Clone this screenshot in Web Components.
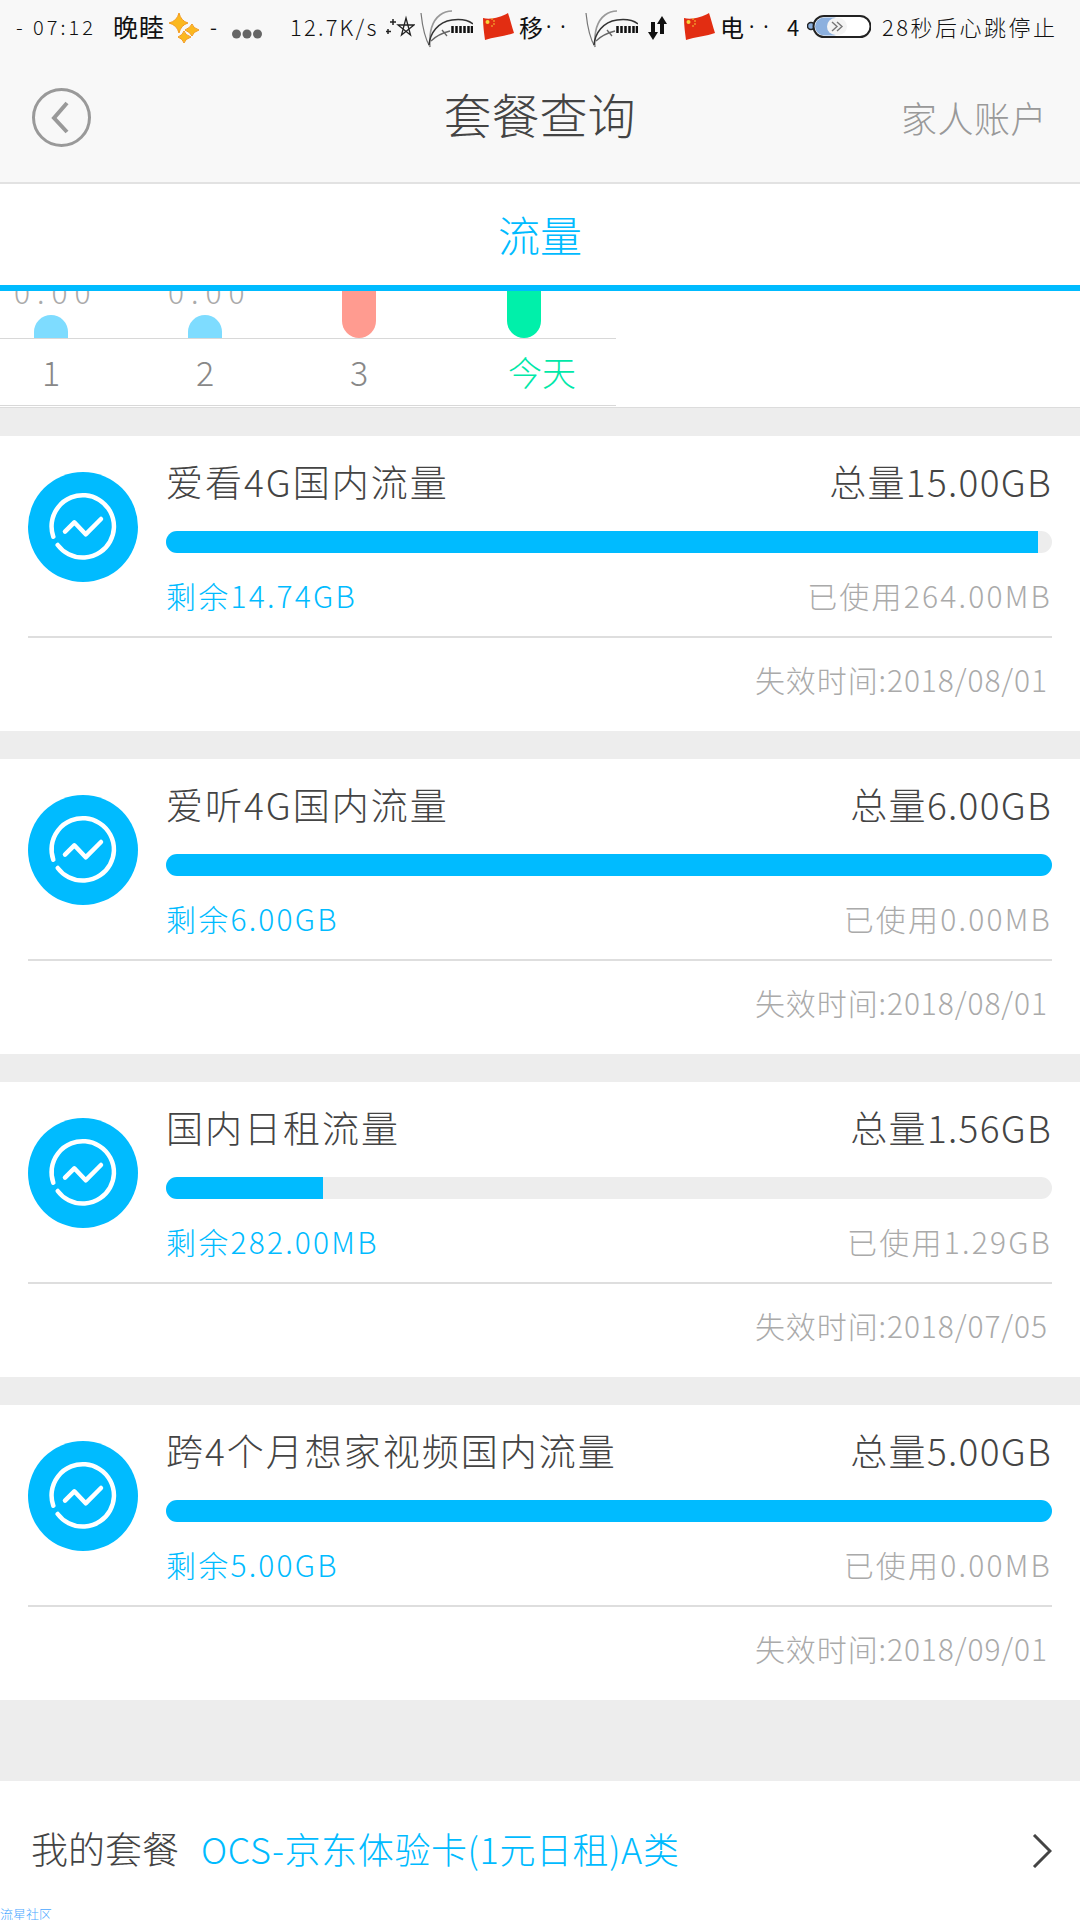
<!DOCTYPE html>
<html>
<head>
<meta charset="utf-8">
<style>
  html, body { margin: 0; padding: 0; background: #fff; }
  body { width: 1080px; height: 1920px; overflow: hidden; font-family: "Noto Sans CJK SC", "Noto Sans", sans-serif; }
  app-page { height: 1920px; }
</style>
</head>
<body>
<app-page>
  <nav-bar title="套餐查询" action="家人账户"></nav-bar>
  <tab-strip label="流量"></tab-strip>
  <usage-chart></usage-chart>
  <data-card name="爱看4G国内流量" total="总量15.00GB" left="剩余14.74GB" used="已使用264.00MB" expiry="失效时间:2018/08/01" percent="98.4"></data-card>
  <data-card name="爱听4G国内流量" total="总量6.00GB" left="剩余6.00GB" used="已使用0.00MB" expiry="失效时间:2018/08/01" percent="100"></data-card>
  <data-card name="国内日租流量" total="总量1.56GB" left="剩余282.00MB" used="已使用1.29GB" expiry="失效时间:2018/07/05" percent="17.7"></data-card>
  <data-card name="跨4个月想家视频国内流量" total="总量5.00GB" left="剩余5.00GB" used="已使用0.00MB" expiry="失效时间:2018/09/01" percent="100"></data-card>
  <plan-row name="OCS-京东体验卡(1元日租)A类"></plan-row>
</app-page>

<script>
const SANS = `"Noto Sans CJK SC", "Noto Sans", sans-serif`;

class AppPage extends HTMLElement {
    constructor() {
        super();
        this.attachShadow({ mode: 'open' });
        this.shadowRoot.innerHTML = `
            <style>
                :host { display: flex; flex-direction: column; width: 1080px; background: #ededed; font-family: ${SANS}; }
                ::slotted(data-card) { margin-top: 28px; }
            </style>
            <slot></slot>
        `;
    }
}
customElements.define('app-page', AppPage);

class StatusBar extends HTMLElement {
    constructor() {
        super();
        this.attachShadow({ mode: 'open' });
        const plant = ml => `<svg width="53" height="46" viewBox="0 0 53 46" fill="none" stroke="#555" style="margin-left:${ml}px">
            <path d="M10 44C4 34 2 20 1 10" stroke-width="1.2" stroke="#777"/>
            <path d="M10 44C9 30 12 18 20 12C24 9 28 8 32 8" stroke-width="1.6" stroke="#999"/>
            <path d="M9 42C10 30 18 19 32 17C40 16 48 17 53 21" stroke-width="1.5" stroke="#333"/>
            <path d="M11 38C16 33 22 30 30 28M22 27L27 33" stroke-width="1.3" stroke="#666"/>
            <path d="M32.500 23V30M36.500 23V30M40.500 23V30M44.500 23V30M48.500 23V30M52 23V30" stroke="#111" stroke-width="2.5"/>
        </svg>`;
        const flag = ml => `<svg width="32" height="28" viewBox="0 0 32 28" style="margin:2px 0 0 ${ml}px">
            <path d="M1 5C9 7 19 4 26 0C28 6 30 14 32 20C24 23 12 24 3 27C2 20 1 12 1 5Z" fill="#e22d12"/>
            <circle cx="5.500" cy="9" r="2" fill="#f7d43a"/>
            <circle cx="10" cy="6" r=".8" fill="#f7d43a"/><circle cx="12" cy="8" r=".8" fill="#f7d43a"/><circle cx="12" cy="11" r=".8" fill="#f7d43a"/><circle cx="10" cy="13" r=".8" fill="#f7d43a"/>
        </svg>`;
        this.shadowRoot.innerHTML = `
            <style>
                :host { display: flex; align-items: center; height: 52px; padding-left: 16px; box-sizing: border-box; color: #111; font-size: 20px; white-space: nowrap; overflow: hidden; }
                span { display: block; flex: none; }
                svg { display: block; flex: none; }
                .num { letter-spacing: 3px; font-weight: 300; }
                .cjk { font-size: 24px; }
                .dots { width: 24px; margin-left: 3px; font-family: "Noto Sans", sans-serif; font-size: 20px; letter-spacing: 9px; }
            </style>
            <span class="num" style="width:76px">- 07:12</span>
            <span class="cjk" style="width:52px;margin-left:21px;font-size:25px;letter-spacing:1px">晚睦</span>
            <svg width="32" height="32" viewBox="0 0 32 32" style="margin:3px 0 0 3px">
                <path d="M11 1Q13 9 20 11Q13 13 11 21Q9 13 1 11Q9 9 11 1Z" fill="#fbb81e" stroke="#f39a1e"/>
                <path d="M24 12Q25 16 31 18Q25 20 24 24Q22 20 17 18Q22 16 24 12Z" fill="#fbb81e" stroke="#f39a1e"/>
                <path d="M16 19Q17 23 23 25Q17 27 16 31Q15 27 10 25Q15 23 16 19Z" fill="#fbb81e" stroke="#f39a1e"/>
            </svg>
            <span style="width:6px;margin-left:10px">-</span>
            <svg width="30" height="10" viewBox="0 0 30 10" style="margin:16px 0 0 16px" fill="#666"><circle cx="4.500" cy="5" r="4.500"/><circle cx="15" cy="5" r="4.500"/><circle cx="25.500" cy="5" r="4.500"/></svg>
            <span class="num" style="width:86px;margin-left:28px;font-size:22px;letter-spacing:2.2px">12.7K/s</span>
            <svg width="30" height="30" viewBox="0 0 30 30" fill="none" stroke="#222" stroke-width="1.3" style="margin:6px 0 0 9px">
                <path d="M21 4L25.500 21L13 11H29L16.500 21Z"/>
                <path d="M8 5V11M5 8H11M3 15V20M1 17.500H6" stroke-width="1.500"/>
            </svg>
            ${plant(5)}
            ${flag(9)}
            <span class="cjk" style="width:24px;margin-left:5px">移</span>
            <span class="dots" style="margin-right:-5px">··</span>
            ${plant(20)}
            <svg width="19" height="25" viewBox="0 0 19 25" fill="#111" style="margin:4px 0 0 10px"><path d="M5 24L0 16H3V6H7V16H10ZM14 0L19 8H16V18H12V8H9Z"/></svg>
            ${flag(16)}
            <span class="cjk" style="width:24px;margin-left:5px">电</span>
            <span class="dots" style="margin-left:5px;margin-right:-8px">··</span>
            <span style="width:13px;margin-left:22px;font-size:22px">4</span>
            <svg width="64" height="23" viewBox="0 0 64 23" style="margin:0 0 0 7px">
                <circle cx="4" cy="11" r="3.500" fill="#8cb0de" stroke="#222" stroke-width="1.500"/>
                <rect x="6.500" y="1" width="57" height="21" rx="10.500" fill="#fff" stroke="#222" stroke-width="2"/>
                <rect x="8" y="2.500" width="28" height="18" rx="9" fill="#8cb0de"/>
                <rect x="20" y="3" width="20" height="17" rx="8.500" fill="#f4f4f4"/>
                <path d="M25 7L30 11.500L25 16M30 7L35 11.500L30 16" fill="none" stroke="#777" stroke-width="1.400"/>
            </svg>
            <span style="margin-left:11px;font-size:22px;letter-spacing:2.500px;font-weight:300">28秒后心跳停止</span>
        `;
    }
}
customElements.define('status-bar', StatusBar);

class NavBar extends HTMLElement {
    constructor() {
        super();
        this.attachShadow({ mode: 'open' });
        this.shadowRoot.innerHTML = `
            <style>
                :host { display: block; background: #f8f8f8; border-bottom: 2px solid #e2e2e2; height: 184px; box-sizing: border-box; }
                .row { display: grid; grid-template-columns: 1fr auto 1fr; align-items: center; height: 130px; padding: 0 33px 0 32px; }
                .title { font-size: 48px; color: #444; line-height: 1; font-weight: 300; padding-bottom: 8px; }
                .action { justify-self: end; font-size: 36px; color: #999; letter-spacing: 0.5px; font-weight: 300; }
                svg { display: block; }
            </style>
            <status-bar></status-bar>
            <div class="row">
                <svg width="59" height="59" viewBox="0 0 59 59" fill="none" stroke="#999" stroke-width="3">
                    <circle cx="29.500" cy="29.500" r="28"/>
                    <path d="M35 15L22 30L35 44" stroke-width="4"/>
                </svg>
                <span class="title">${this.getAttribute('title')}</span>
                <span class="action">${this.getAttribute('action')}</span>
            </div>
        `;
    }
}
customElements.define('nav-bar', NavBar);

class TabStrip extends HTMLElement {
    constructor() {
        super();
        this.attachShadow({ mode: 'open' });
        this.shadowRoot.innerHTML = `
            <style>
                :host { display: flex; justify-content: center; align-items: center; height: 107px; box-sizing: border-box; padding-bottom: 3px; background: #fff; border-bottom: 6px solid #00bbff; color: #00bbff; font-size: 42px; font-weight: 300; }
            </style>
            ${this.getAttribute('label')}
        `;
    }
}
customElements.define('tab-strip', TabStrip);

class UsageChart extends HTMLElement {
    constructor() {
        super();
        this.attachShadow({ mode: 'open' });
        const cols = [
            { label: '1', val: '0.00', h: 23, color: '#7edcff' },
            { label: '2', val: '0.00', h: 23, color: '#7edcff' },
            { label: '3', h: 47, color: '#ff9b90' },
            { label: '今天', h: 47, color: '#00f0aa', text: '#00e8a8', shift: 18 }
        ];
        // one grid column per day, widths taken from the spacing of the bars
        const bars = cols.map(c => `
            <div class="bar-cell">
                ${c.val ? `<span class="val">${c.val}</span>` : ''}
                <i class="${c.val ? 'dot' : ''}" style="height:${c.h}px;background:${c.color}"></i>
            </div>`).join('');
        const labels = cols.map(c => `
            <span class="day" style="color:${c.text || '#888'};transform:translateX(${c.shift || 0}px)">${c.label}</span>`).join('');
        this.shadowRoot.innerHTML = `
            <style>
                :host { display: block; background: #fff; height: 116px; border-bottom: 1px solid #dcdcdc; overflow: hidden; }
                .plot, .days { display: grid; grid-template-columns: 154px 154px 165px 143px; width: 616px; border-bottom: 1px solid #d8d8d8; }
                .plot { height: 47px; }
                .days { height: 66px; align-items: center; }
                .bar-cell { position: relative; display: flex; justify-content: center; align-items: flex-end; width: 102px; height: 47px; overflow: hidden; }
                .bar-cell i { display: block; width: 34px; border-radius: 0 0 17px 17px; }
                .bar-cell i.dot { border-radius: 17px 17px 0 0; }
                .val { position: absolute; left: 14px; top: -19px; color: #aaa; font-size: 30px; line-height: 38px; letter-spacing: 7px; font-weight: 300; }
                .day { display: block; width: 102px; text-align: center; font-size: 34px; font-weight: 300; line-height: 66px; white-space: nowrap; }
            </style>
            <div class="plot">${bars}</div>
            <div class="days">${labels}</div>
        `;
    }
}
customElements.define('usage-chart', UsageChart);

class DataCard extends HTMLElement {
    constructor() {
        super();
        this.attachShadow({ mode: 'open' });
        const a = n => this.getAttribute(n);
        this.shadowRoot.innerHTML = `
            <style>
                :host { display: block; background: #fff; height: 295px; padding: 0 28px; box-sizing: border-box; font-weight: 300; }
                .top { display: grid; grid-template-columns: 110px 1fr; column-gap: 28px; height: 200px; border-bottom: 2px solid #dedede; box-sizing: content-box; }
                svg { display: block; margin-top: 36px; }
                .head, .foot { display: flex; justify-content: space-between; white-space: nowrap; }
                .head { margin-top: 20px; font-size: 37px; line-height: 50px; color: #444; letter-spacing: 2px; }
                .total { letter-spacing: 1.3px; }
                .track { height: 22px; margin-top: 25px; border-radius: 11px; background: #ededed; overflow: hidden; }
                .fill { height: 100%; background: #00bbff; }
                .foot { margin-top: 22px; font-size: 30px; line-height: 40px; letter-spacing: 2.2px; }
                .left { color: #00bbff; }
                .used { color: #aaa; }
                .expiry { padding: 21px 4px 0 0; text-align: right; font-size: 30px; line-height: 40px; color: #aaa; letter-spacing: 0.9px; white-space: nowrap; }
            </style>
            <div class="top">
                <svg width="110" height="110" viewBox="0 0 110 110">
                    <circle cx="55" cy="55" r="55" fill="#00bbff"/>
                    <path d="M25.300 64.700A31.200 31.200 0 1 1 29.700 73" fill="none" stroke="#fff" stroke-width="4.500" stroke-linecap="round"/>
                    <path d="M37 59.700L46.300 50.300L57.700 62.300L73 47" fill="none" stroke="#fff" stroke-width="4.500" stroke-linecap="round" stroke-linejoin="round"/>
                </svg>
                <div>
                    <div class="head"><span>${a('name')}</span><span class="total">${a('total')}</span></div>
                    <div class="track"><div class="fill" style="width:${a('percent')}%"></div></div>
                    <div class="foot"><span class="left">${a('left')}</span><span class="used">${a('used')}</span></div>
                </div>
            </div>
            <div class="expiry">${a('expiry')}</div>
        `;
    }
}
customElements.define('data-card', DataCard);

class PlanRow extends HTMLElement {
    constructor() {
        super();
        this.attachShadow({ mode: 'open' });
        this.shadowRoot.innerHTML = `
            <style>
                :host { display: block; position: relative; margin-top: 81px; height: 139px; background: #fff; font-weight: 300; }
                .row { display: flex; align-items: center; height: 139px; padding: 0 28px 0 31px; box-sizing: border-box; white-space: nowrap; }
                .label { font-size: 37px; color: #444; margin: 0 22px 5px 0; }
                .name { flex: 1; font-size: 36px; color: #00bbff; letter-spacing: 0.6px; margin-bottom: 5px; }
                svg { display: block; }
                .mark { position: absolute; left: 0; bottom: 0; font-size: 13px; line-height: 13px; color: #4aa8ff; }
            </style>
            <div class="row">
                <span class="label">我的套餐</span>
                <span class="name">${this.getAttribute('name')}</span>
                <svg width="20" height="34" viewBox="0 0 20 34" fill="none" stroke="#444" stroke-width="3"><path d="M2 1L18 17L2 33"/></svg>
            </div>
            <span class="mark">流星社区</span>
        `;
    }
}
customElements.define('plan-row', PlanRow);
</script>
</body>
</html>
